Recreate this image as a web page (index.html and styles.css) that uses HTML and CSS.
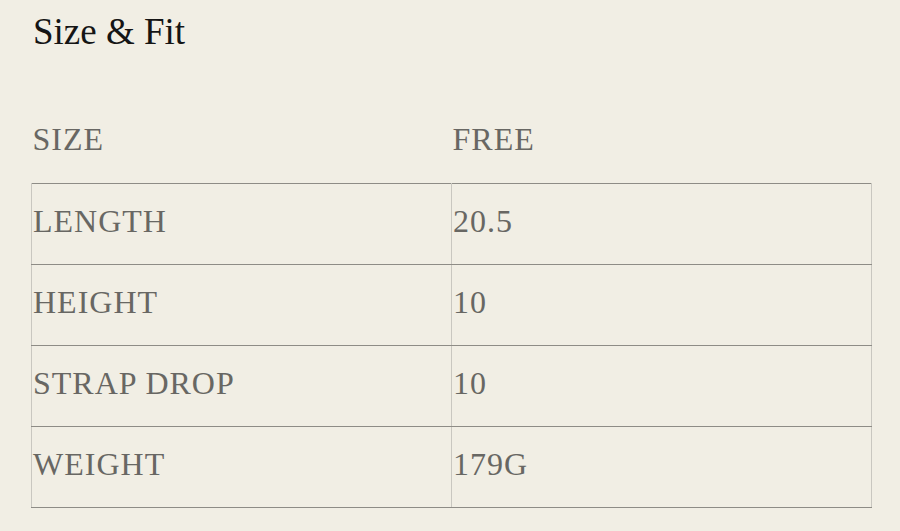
FILE: index.html
```html
<!DOCTYPE html>
<html>
<head>
<meta charset="utf-8">
<link rel="stylesheet" href="styles.css">
</head>
<body>
<section class="panel">
  <h2 class="title">Size &amp; Fit</h2>
  <table class="sizes">
    <thead>
      <tr><th>SIZE</th><th>FREE</th></tr>
    </thead>
    <tbody>
      <tr><td>LENGTH</td><td>20.5</td></tr>
      <tr><td>HEIGHT</td><td>10</td></tr>
      <tr><td>STRAP DROP</td><td>10</td></tr>
      <tr><td>WEIGHT</td><td>179G</td></tr>
    </tbody>
  </table>
</section>
</body>
</html>
```
FILE: styles.css
```css
html, body {
  margin: 0;
  background: #f1eee4;
}
.panel {
  padding: 10px 29px 0 31px;
  font-family: "Liberation Serif", "Times New Roman", serif;
}
.title {
  margin: 0;
  font-size: 37px;
  line-height: 44px;
  font-weight: normal;
  color: #151515;
  padding-left: 2px;
}
.sizes {
  margin-top: 48px;
  width: 841px;
  border-collapse: collapse;
  table-layout: fixed;
  font-size: 32px;
  letter-spacing: 1px;
  color: #686763;
}
.sizes th, .sizes td {
  width: 50%;
  height: 74px;
  padding: 0 0 6px 1px;
  text-align: left;
  vertical-align: middle;
  font-weight: normal;
}
.sizes th {
  height: 75px;
}
.sizes td {
  border: 1px solid #c9c7c0;
  border-top: 1px solid #8e8c86;
  border-bottom: 1px solid #8e8c86;
}
```
